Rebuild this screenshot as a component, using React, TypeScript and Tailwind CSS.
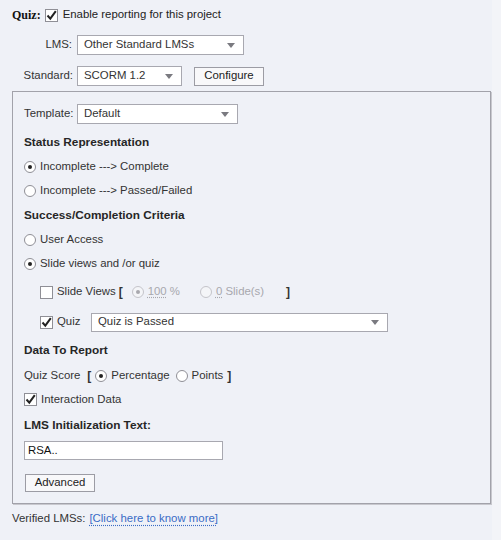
import React from "react";

const font = { fontFamily: '"Liberation Sans", Arial, sans-serif' };

const Arrow = () => (
  <svg width="8" height="5" viewBox="0 0 8 5" className="shrink-0">
    <path d="M0 0 L8 0 L4 5 Z" fill="#7a7a80" />
  </svg>
);

const Select = ({ value, className }: { value: string; className: string }) => (
  <div
    className={`flex items-center justify-between bg-white border border-[#a8a8b0] pl-[6px] pr-[8px] text-[#333] ${className}`}
  >
    <span>{value}</span>
    <Arrow />
  </div>
);

const Checkbox = ({ checked }: { checked?: boolean }) => (
  <div className="w-[13px] h-[13px] bg-white border border-[#8f8f96] shrink-0 relative">
    {checked && (
      <svg width="11" height="11" viewBox="0 0 11 11" className="absolute left-0 top-0">
        <path d="M1.5 5.5 L4.3 8.6 L9.8 1.2" fill="none" stroke="#222" strokeWidth="2" />
      </svg>
    )}
  </div>
);

const Radio = ({ checked, disabled }: { checked?: boolean; disabled?: boolean }) => (
  <div
    className={`w-[12px] h-[12px] rounded-full border shrink-0 flex items-center justify-center ${
      disabled ? "border-[#c4c4ca] bg-[#f4f5f8]" : "border-[#8f8f96] bg-white"
    }`}
  >
    {checked && (
      <div className={`w-[4px] h-[4px] rounded-full ${disabled ? "bg-[#a8a8ae]" : "bg-[#222]"}`} />
    )}
  </div>
);

const Heading = ({ children, className }: { children: React.ReactNode; className: string }) => (
  <div className={`h-[18px] flex items-center font-bold text-[11.8px] text-[#262626] ${className}`}>
    {children}
  </div>
);

const RadioRow = ({ label, checked }: { label: string; checked?: boolean }) => (
  <div className="h-[24px] flex items-center gap-[4px]">
    <Radio checked={checked} />
    <span>{label}</span>
  </div>
);

const Button = ({ children, className }: { children: React.ReactNode; className: string }) => (
  <div
    className={`flex items-center justify-center bg-[#f8f8fa] border border-[#9c9ca4] text-[#222] ${className}`}
  >
    {children}
  </div>
);

export default function App() {
  return (
    <div className="w-[501px] h-[540px] bg-[#f3f4f8]">
      <div
        className="w-[492px] h-[540px] bg-[#eff1f7] pl-[12px] pt-[6px] text-[11.4px] text-[#333]"
        style={font}
      >
        <div className="h-[18px] flex items-center">
          <span
            className="font-bold text-[12px] text-[#111] mr-[4px]"
            style={{ fontFamily: '"Liberation Serif", "Times New Roman", serif' }}
          >
            Quiz:
          </span>
          <Checkbox checked />
          <span className="ml-[5px] text-[#222]">Enable reporting for this project</span>
        </div>

        <div className="mt-[11px] h-[20px] flex items-center">
          <span className="w-[65px] text-right pr-[5px]">LMS:</span>
          <Select value="Other Standard LMSs" className="w-[167px] h-[20px]" />
        </div>

        <div className="mt-[11px] h-[20px] flex items-center">
          <span className="w-[65px] text-right pr-[4px]">Standard:</span>
          <Select value="SCORM 1.2" className="w-[105px] h-[20px]" />
          <Button className="ml-[12px] w-[70px] h-[19px]">Configure</Button>
        </div>

        <div className="mt-[5px] w-[479px] border border-[#a2a2aa] shadow-[1px_1px_0_#c8c8ce] pl-[11px] pt-[12px] pb-[11px]">
          <div className="h-[20px] flex items-center">
            <span className="w-[53px]">Template:</span>
            <Select value="Default" className="w-[161px] h-[20px]" />
          </div>

          <Heading className="mt-[10px]">Status Representation</Heading>
          <div className="mt-[3px]">
            <RadioRow label="Incomplete ---> Complete" checked />
            <RadioRow label="Incomplete ---> Passed/Failed" />
          </div>

          <Heading className="mt-[4px]">Success/Completion Criteria</Heading>
          <div className="mt-[3px]">
            <RadioRow label="User Access" />
            <RadioRow label="Slide views and /or quiz" checked />
          </div>

          <div className="mt-[4px] h-[24px] flex items-center pl-[16px]">
            <Checkbox />
            <span className="ml-[4px]">Slide Views</span>
            <span className="ml-[3px] font-bold text-[12px]">[</span>
            <div className="ml-[9px] flex items-center gap-[4px] text-[#a8a8ae]">
              <Radio checked disabled />
              <span>
                <span className="underline decoration-dotted">100</span> %
              </span>
            </div>
            <div className="ml-[20px] flex items-center gap-[4px] text-[#a8a8ae]">
              <Radio disabled />
              <span>
                <span className="underline decoration-dotted">0</span> Slide(s)
              </span>
            </div>
            <span className="ml-[22px] font-bold text-[12px]">]</span>
          </div>

          <div className="mt-[6px] h-[24px] flex items-center pl-[16px]">
            <Checkbox checked />
            <span className="ml-[4px] w-[34px]">Quiz</span>
            <Select value="Quiz is Passed" className="w-[297px] h-[19px]" />
          </div>

          <Heading className="mt-[8px]">Data To Report</Heading>

          <div className="mt-[4px] h-[24px] flex items-center">
            <span>Quiz Score</span>
            <span className="ml-[7px] font-bold text-[12px]">[</span>
            <div className="ml-[4px] flex items-center gap-[4px]">
              <Radio checked />
              <span>Percentage</span>
            </div>
            <div className="ml-[6px] flex items-center gap-[4px]">
              <Radio />
              <span>Points</span>
            </div>
            <span className="ml-[4px] font-bold text-[12px]">]</span>
          </div>

          <div className="h-[23px] flex items-center">
            <Checkbox checked />
            <span className="ml-[4px]">Interaction Data</span>
          </div>

          <Heading className="mt-[6px]">LMS Initialization Text:</Heading>

          <div className="mt-[6px] w-[199px] h-[19px] bg-white border border-[#a8a8b0] flex items-center pl-[3px] text-[#111]">
            RSA..
          </div>

          <Button className="mt-[14px] ml-[1px] w-[70px] h-[18px]">Advanced</Button>
        </div>

        <div className="h-[30px] flex items-center">
          <span>Verified LMSs:</span>
          <span className="ml-[4px] text-[#3a6cc6] underline decoration-dotted underline-offset-2">
            [Click here to know more]
          </span>
        </div>
      </div>
    </div>
  );
}
